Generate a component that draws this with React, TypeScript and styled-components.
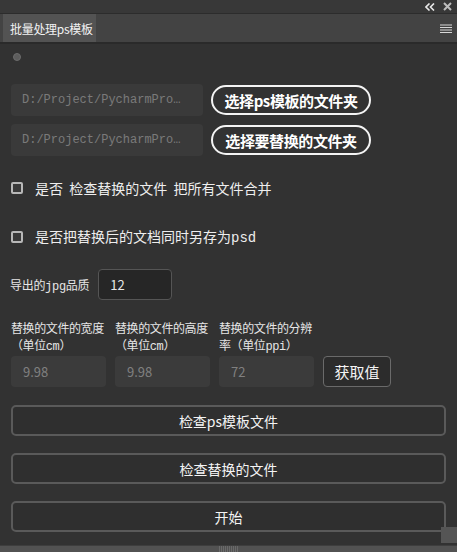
import React from "react";
import styled, { createGlobalStyle } from "styled-components";

const GlobalStyle = createGlobalStyle`
  html, body {
    margin: 0;
    padding: 0;
    background: #323232;
  }
  * {
    box-sizing: border-box;
  }
`;

const cjk = `"Microsoft YaHei", "Noto Sans CJK SC", "Noto Sans", sans-serif`;
const mono = `"Liberation Mono", "Noto Sans CJK SC", monospace`;

const App = () => {
  return (
    <>
      <GlobalStyle />
      <Panel>
        <TopStrip>
          <StripIcon>
            <svg width="10" height="8" viewBox="0 0 10 8">
              <path d="M4.5 0.5 L1 4 L4.5 7.5 M9 0.5 L5.5 4 L9 7.5" stroke="#e8e8e8" strokeWidth="1.6" fill="none" />
            </svg>
          </StripIcon>
          <StripIcon>
            <svg width="9" height="9" viewBox="0 0 9 9">
              <path d="M1 1 L8 8 M8 1 L1 8" stroke="#bdbdbd" strokeWidth="2" />
            </svg>
          </StripIcon>
        </TopStrip>
        <TabBar>
          <Tab>批量处理ps模板</Tab>
          <Menu>
            <svg width="12" height="9" viewBox="0 0 12 9">
              <path d="M0 1 H12 M0 3.5 H12 M0 6 H12 M0 8.5 H12" stroke="#d8d8d8" strokeWidth="1" />
            </svg>
          </Menu>
        </TabBar>

        <Content>
          <Dot />

          <PathRows>
            <PathRow>
              <PathField>D:/Project/PycharmPro…</PathField>
              <PillButton>选择ps模板的文件夹</PillButton>
            </PathRow>
            <PathRow>
              <PathField>D:/Project/PycharmPro…</PathField>
              <PillButton>选择要替换的文件夹</PillButton>
            </PathRow>
          </PathRows>

          <CheckRow $top={22}>
            <Box />
            <CheckLabel>是否&nbsp;&nbsp;检查替换的文件&nbsp;&nbsp;把所有文件合并</CheckLabel>
          </CheckRow>
          <CheckRow $top={29}>
            <Box />
            <CheckLabel>
              是否把替换后的文档同时另存为<Mono>psd</Mono>
            </CheckLabel>
          </CheckRow>

          <QualityRow>
            <SmallLabel>
              导出的<Mono>jpg</Mono>品质
            </SmallLabel>
            <QualityInput>12</QualityInput>
          </QualityRow>

          <SizeGrid>
            <SizeCol>
              <SizeLabel>
                <LabelLine>替换的文件的宽度</LabelLine>
                <LabelLine>（单位<Mono>cm</Mono>）</LabelLine>
              </SizeLabel>
              <ValueField>9.98</ValueField>
            </SizeCol>
            <SizeCol>
              <SizeLabel>
                <LabelLine>替换的文件的高度</LabelLine>
                <LabelLine>（单位<Mono>cm</Mono>）</LabelLine>
              </SizeLabel>
              <ValueField>9.98</ValueField>
            </SizeCol>
            <SizeCol>
              <SizeLabel>
                <LabelLine>替换的文件的分辨</LabelLine>
                <LabelLine>率（单位<Mono>ppi</Mono>）</LabelLine>
              </SizeLabel>
              <ValueField>72</ValueField>
            </SizeCol>
            <FetchButton>获取值</FetchButton>
          </SizeGrid>

          <Actions>
            <WideButton>检查ps模板文件</WideButton>
            <WideButton>检查替换的文件</WideButton>
            <WideButton>开始</WideButton>
          </Actions>
        </Content>

        <Grip />
        <BottomBar>
          <BarThumb />
        </BottomBar>
      </Panel>
    </>
  );
};

export default App;

const Panel = styled.div`
  position: relative;
  width: 457px;
  height: 552px;
  display: flex;
  flex-direction: column;
  background: #323232;
  font-family: ${cjk};
  overflow: hidden;
`;

const TopStrip = styled.div`
  flex-shrink: 0;
  height: 14px;
  display: flex;
  justify-content: flex-end;
  align-items: center;
  gap: 7px;
  padding-right: 4px;
  background: #383838;
  border-bottom: 1px solid #2c2c2c;
`;

const StripIcon = styled.div`
  width: 11px;
  height: 11px;
  display: flex;
  align-items: center;
  justify-content: center;
`;

const TabBar = styled.div`
  flex-shrink: 0;
  height: 30px;
  display: flex;
  align-items: stretch;
  justify-content: space-between;
  padding-left: 3px;
  background: #434343;
  border-bottom: 2px solid #2a2a2a;
`;

const Tab = styled.div`
  width: 93px;
  display: flex;
  align-items: center;
  padding-left: 7px;
  background: #535353;
  color: #f2f2f2;
  font-size: 12px;
  letter-spacing: -0.3px;
`;

const Menu = styled.div`
  display: flex;
  align-items: center;
  padding-right: 5px;
`;

const Content = styled.div`
  flex: 1;
  min-height: 0;
  display: flex;
  flex-direction: column;
  padding: 0 11px;
`;

const Dot = styled.div`
  flex-shrink: 0;
  width: 8px;
  height: 8px;
  margin: 9px 0 0 2px;
  border-radius: 50%;
  background: #5d5d5d;
  border: 1px solid #6c6c6c;
`;

const PathRows = styled.div`
  display: flex;
  flex-direction: column;
  gap: 8px;
  margin-top: 23px;
`;

const PathRow = styled.div`
  display: flex;
  align-items: center;
  gap: 8px;
`;

const PathField = styled.div`
  width: 192px;
  height: 32px;
  display: flex;
  align-items: center;
  padding-left: 11px;
  border-radius: 4px;
  background: #3a3a3a;
  color: #7a7a7a;
  font-family: ${mono};
  font-size: 12px;
  white-space: nowrap;
  overflow: hidden;
`;

const PillButton = styled.div`
  width: 160px;
  height: 30px;
  display: flex;
  align-items: center;
  justify-content: center;
  border: 2px solid #f4f4f4;
  border-radius: 15px;
  color: #ffffff;
  font-size: 15px;
  font-weight: 700;
  letter-spacing: -0.4px;
`;

const CheckRow = styled.div<{ $top: number }>`
  flex-shrink: 0;
  height: 20px;
  display: flex;
  align-items: center;
  gap: 12px;
  margin-top: ${(p) => p.$top}px;
`;

const Box = styled.div`
  width: 12px;
  height: 12px;
  border: 2px solid #b8b8b8;
  border-radius: 2px;
  background: #3a3a3a;
`;

const CheckLabel = styled.span`
  color: #eeeeee;
  font-size: 14px;
  line-height: 20px;
`;

const Mono = styled.span`
  font-family: ${mono};
`;

const QualityRow = styled.div`
  display: flex;
  align-items: center;
  gap: 9px;
  margin-top: 22px;
  margin-left: -1px;
`;

const SmallLabel = styled.span`
  color: #e6e6e6;
  font-size: 12px;
  letter-spacing: -0.3px;
`;

const QualityInput = styled.div`
  width: 74px;
  height: 31px;
  display: flex;
  align-items: center;
  padding-left: 11px;
  border: 1px solid #555555;
  border-radius: 4px;
  background: #262626;
  color: #e8e8e8;
  font-size: 13px;
`;

const SizeGrid = styled.div`
  display: flex;
  align-items: flex-end;
  gap: 9px;
  margin-top: 19px;
`;

const SizeCol = styled.div`
  width: 95px;
  display: flex;
  flex-direction: column;
  gap: 3px;
`;

const SizeLabel = styled.div`
  display: flex;
  flex-direction: column;
  color: #e6e6e6;
  font-size: 12px;
  letter-spacing: -0.4px;
  white-space: nowrap;
`;

const LabelLine = styled.div`
  height: 17px;
  line-height: 17px;
`;

const ValueField = styled.div`
  height: 31px;
  display: flex;
  align-items: center;
  padding-left: 12px;
  border-radius: 4px;
  background: #3b3b3b;
  color: #808080;
  font-size: 13px;
`;

const FetchButton = styled.div`
  width: 68px;
  height: 31px;
  display: flex;
  align-items: center;
  justify-content: center;
  border: 1px solid #6a6a6a;
  border-radius: 4px;
  background: #2c2c2c;
  color: #f4f4f4;
  font-size: 15px;
`;

const Actions = styled.div`
  display: flex;
  flex-direction: column;
  gap: 17px;
  margin-top: 18px;
`;

const WideButton = styled.div`
  height: 31px;
  display: flex;
  align-items: center;
  justify-content: center;
  border: 2px solid #5a5a5a;
  border-radius: 5px;
  background: #2f2f2f;
  color: #f4f4f4;
  font-size: 14px;
`;

const Grip = styled.div`
  position: absolute;
  right: 0;
  bottom: 9px;
  width: 16px;
  height: 16px;
  background: #555555;
`;

const BottomBar = styled.div`
  flex-shrink: 0;
  height: 7px;
  display: flex;
  justify-content: center;
  background: #525252;
  border-top: 1px solid #3e3e3e;
`;

const BarThumb = styled.div`
  width: 20px;
  height: 100%;
  background: repeating-linear-gradient(90deg, #6a6a6a 0 1px, #525252 1px 2px);
`;
